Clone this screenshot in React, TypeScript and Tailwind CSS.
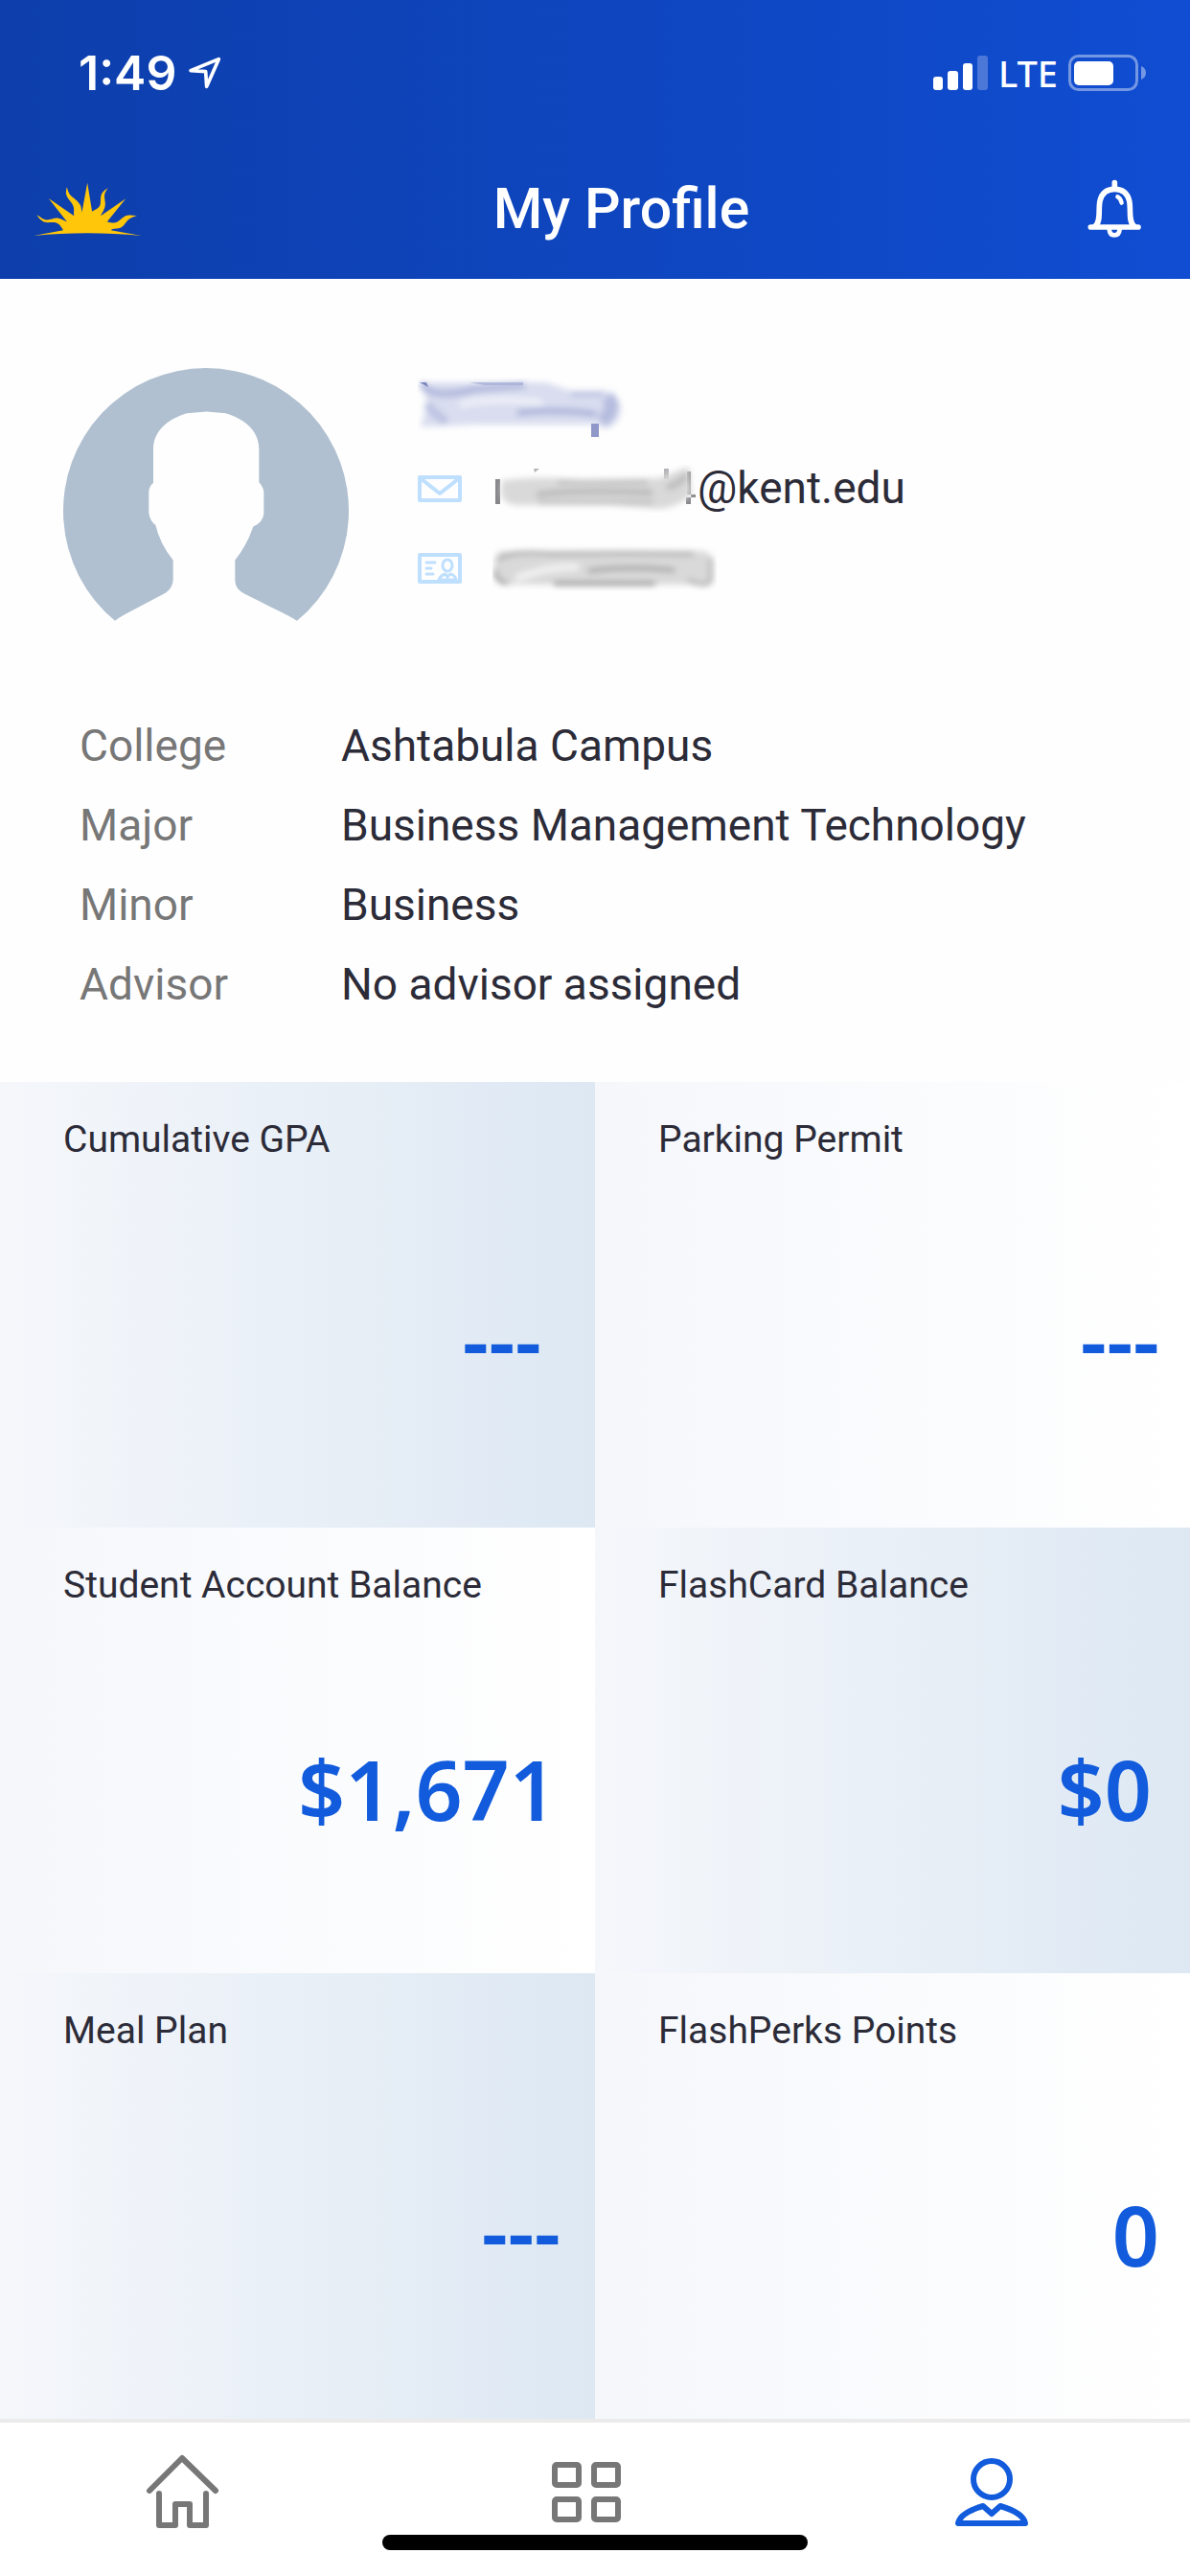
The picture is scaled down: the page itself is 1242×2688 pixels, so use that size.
import { clsx } from 'clsx'

type Stat = { label: string; value: string | null; shaded: boolean; inset: string }

const DETAILS = [
  { label: 'College', value: 'Ashtabula Campus' },
  { label: 'Major', value: 'Business Management Technology' },
  { label: 'Minor', value: 'Business' },
  { label: 'Advisor', value: 'No advisor assigned' },
]

const STATS: Stat[] = [
  { label: 'Cumulative GPA', value: null, shaded: true, inset: 'pr-14' },
  { label: 'Parking Permit', value: null, shaded: false, inset: 'pr-8' },
  { label: 'Student Account Balance', value: '$1,671', shaded: false, inset: 'pr-10' },
  { label: 'FlashCard Balance', value: '$0', shaded: true, inset: 'pr-10' },
  { label: 'Meal Plan', value: null, shaded: true, inset: 'pr-9' },
  { label: 'FlashPerks Points', value: '0', shaded: false, inset: 'pr-8' },
]

function StatusBar() {
  return (
    <div className="flex items-center justify-between pt-12 pl-[82px] pr-[46px] text-white">
      <div className="flex items-center gap-3">
        <span className="font-['Inter',sans-serif] text-[50px] leading-14 font-semibold">1:49</span>
        <svg viewBox="584 174 108 108" className="size-9" fill="none" stroke="currentColor" strokeWidth="11" strokeLinejoin="round">
          <path d="M681 185 593 221 640 224 643 271Z" />
        </svg>
      </div>
      <div className="flex items-center gap-[11px]">
        <svg viewBox="0 0 57 36" className="h-9 w-[57px]" fill="currentColor">
          <rect x="0" y="22" width="10" height="14" rx="3" />
          <rect x="15" y="16" width="11" height="20" rx="3" />
          <rect x="31" y="8" width="10" height="28" rx="3" />
          <rect x="46" y="0" width="11" height="36" rx="3" opacity="0.25" />
        </svg>
        <span className="font-['Noto_Sans',sans-serif] text-[38px] leading-14 font-medium">LTE</span>
        <svg viewBox="0 0 81 38" className="h-[38px] w-[81px]">
          <rect x="1.5" y="1.5" width="70" height="35" rx="9" fill="none" stroke="white" strokeWidth="3" opacity="0.42" />
          <rect x="6" y="7" width="41" height="25" rx="5" fill="white" />
          <path d="M76 12Q81 14 81 19Q81 24 76 26Z" fill="white" opacity="0.42" />
        </svg>
      </div>
    </div>
  )
}

function SunLogo() {
  return (
    <svg viewBox="104 565 340 172" className="mr-3.5 h-[57px] w-[113px]" fill="#ffc60a">
      <path d="M104 734 197 717C190 705 185 695 170 692C155 690 145 696 132 688C122 682 116 672 114 669C124 672 132 684 146 684C160 684 170 676 182 679C196 682 202 688 209 690L151 616 231 671C229 662 232 655 230 645C227 630 212 622 207 606C204 598 207 590 208 581C212 590 212 596 218 604C228 616 246 624 252 640C254 648 255 654 256 660L273 567 288 658C300 650 312 648 314 634C316 622 313 612 318 602C323 592 332 588 338 583C332 592 328 598 327 606C326 620 332 632 328 644C325 655 319 662 315 671L394 617 335 690C348 692 358 696 368 690C382 682 386 672 400 670C412 668 420 672 431 670C420 674 412 676 404 682C392 692 388 706 374 710C364 713 354 710 347 717L443 734C330 723 215 723 104 734Z" />
    </svg>
  )
}

function BellIcon() {
  return (
    <svg viewBox="937 562 168 186" className="h-[62px] w-14" fill="none" stroke="white" strokeWidth="17" strokeLinecap="round" strokeLinejoin="round">
      <path d="M1022 573V592" />
      <path d="M947 712H1096" />
      <path d="M961 709C980 694 970 660 976 630C982 604 1000 593 1022 593C1044 593 1062 604 1068 630C1074 660 1064 694 1083 709" />
      <path d="M1005 718C1006 732 1013 737 1021 737C1030 737 1037 732 1038 718" strokeWidth="14" />
      <path d="M1031 617Q1040 621 1044 636" strokeWidth="13" />
    </svg>
  )
}

function Avatar() {
  return (
    <svg viewBox="78 71 894 791" className="h-[264px] w-[298px] shrink-0" fill="#b0c0d0" role="img" aria-label="Profile photo">
      <path d="M240 862A447 447 0 1 1 810 862C790 848 770 840 645 777Q616 762 616 735V672Q655 622 673 567Q704 554 706 525V460Q704 440 691 428V325C691 268 650 232 587 212L527 207 465 212C400 232 360 270 360 325V430Q346 442 346 460V525Q350 550 367 562Q380 620 422 672V735Q420 760 398 775L270 842Q250 853 240 862Z" />
    </svg>
  )
}

function MailIcon() {
  return (
    <svg viewBox="0 0 46 28" className="h-7 w-[46px]" fill="none" stroke="#bfdffe" strokeWidth="4" strokeLinejoin="round">
      <rect x="2" y="2" width="42" height="24" />
      <path d="M4 4 23 19 42 4" />
    </svg>
  )
}

function IdCardIcon() {
  return (
    <svg viewBox="0 0 46 32" className="h-8 w-[46px]" fill="none" stroke="#bfdffe" strokeWidth="3" strokeLinecap="round" strokeLinejoin="round">
      <rect x="2" y="2" width="42" height="28" strokeWidth="4" />
      <path d="M9 10H18M9 16H14M9 22H16" />
      <ellipse cx="31" cy="13" rx="5" ry="6" />
      <path d="M22 28Q24 23 29 22L31 25 34 22Q39 23 40 28Z" />
    </svg>
  )
}

// Private values are drawn as a smudge instead of text.
function NameSmudge() {
  return (
    <svg viewBox="0 0 220 64" className="h-16 w-[220px]" role="img" aria-label="Name hidden">
      <defs>
        <filter id="soft-name" x="-10%" y="-20%" width="120%" height="140%">
          <feGaussianBlur stdDeviation="3" />
        </filter>
      </defs>
      <g filter="url(#soft-name)">
        <path d="M3 5H134L160 14H198Q212 20 212 34Q210 50 196 53L182 49H60L20 51H3L10 27Z" fill="#d9ddef" />
        <path d="M4 6Q14 24 60 12L112 8" stroke="#b0b7dc" strokeWidth="7" fill="none" />
        <path d="M10 27Q14 36 30 46" stroke="#bcc3e2" strokeWidth="9" fill="none" />
        <path d="M44 28Q80 20 130 26" stroke="#eceef7" strokeWidth="8" fill="none" />
        <path d="M104 37Q140 32 186 38" stroke="#a9b1d8" strokeWidth="6" fill="none" />
        <path d="M160 17H194" stroke="#b3badd" strokeWidth="4" />
        <path d="M198 20Q208 32 192 46" stroke="#b5bcde" strokeWidth="14" fill="none" />
      </g>
      <path d="M181 48H189V62H181Z" fill="#8f98c9" />
      <path d="M54 5H110V8H70Z" fill="#98a1d0" opacity="0.6" />
      <path d="M2 5H9L11 10Z" fill="#7b86bd" />
    </svg>
  )
}

function EmailSmudge() {
  return (
    <svg viewBox="0 0 212 50" className="h-[50px] w-[212px]" role="img" aria-label="Email user hidden">
      <defs>
        <filter id="soft-mail" x="-10%" y="-20%" width="120%" height="140%">
          <feGaussianBlur stdDeviation="3" />
        </filter>
      </defs>
      <path d="M1 15H6V41H1Z" fill="#85858a" />
      <path d="M41 4H47L42 8Z M177 4H182V15H177Z" fill="#b4b4b8" />
      <path d="M201 7H205V41H200V34H210V31H201Z" fill="#85858a" />
      <g filter="url(#soft-mail)">
        <path d="M8 16Q50 11 90 16L172 14 203 2 206 30Q192 45 170 46L120 42H30Q10 44 7 30Z" fill="#d9d9d9" />
        <path d="M44 31Q80 26 165 29" stroke="#b0b0b0" strokeWidth="5" fill="none" />
        <path d="M66 18H160" stroke="#b8b8b8" strokeWidth="4" />
        <path d="M46 39H165" stroke="#b4b4b4" strokeWidth="3" />
        <path d="M180 24Q194 20 201 10" stroke="#bcbcbc" strokeWidth="7" fill="none" />
      </g>
    </svg>
  )
}

function IdSmudge() {
  return (
    <svg viewBox="0 0 234 50" className="h-[50px] w-[234px]" role="img" aria-label="ID hidden">
      <defs>
        <filter id="soft-id" x="-10%" y="-20%" width="120%" height="140%">
          <feGaussianBlur stdDeviation="3" />
        </filter>
      </defs>
      <g filter="url(#soft-id)">
        <rect x="2" y="7" width="227" height="35" rx="10" fill="#d9d9d9" />
        <path d="M6 16Q20 6 60 10L140 9 210 10" stroke="#ababab" strokeWidth="4" fill="none" />
        <path d="M100 28Q140 22 190 27" stroke="#a8a8a8" strokeWidth="5" fill="none" />
        <path d="M64 41H170" stroke="#8c8c8c" strokeWidth="4" />
        <path d="M24 36Q60 22 90 24" stroke="#f0f0f0" strokeWidth="8" fill="none" />
        <path d="M4 26Q1 38 16 41" stroke="#858585" strokeWidth="3" fill="none" />
        <path d="M204 37Q222 46 228 38V14" stroke="#b0b0b0" strokeWidth="4" fill="none" />
      </g>
    </svg>
  )
}

function StatCard({ label, value, shaded, inset }: Stat) {
  return (
    <section className={clsx('h-[465px] bg-linear-to-r from-[#f5f7fb] pt-8', shaded ? 'to-[#dde8f3]' : 'to-white')}>
      <h2 className="pl-[66px] text-[39px] leading-14">{label}</h2>
      <p
        className={clsx(
          "text-right font-['Noto_Sans',sans-serif] text-[86px] leading-[112px] font-semibold text-[#115bdc]",
          value === null ? 'pt-[125px]' : 'pt-[129px]',
          inset,
        )}
      >
        {value ?? '---'}
      </p>
    </section>
  )
}

function TabBar() {
  return (
    <nav className="relative flex h-[164px] items-start justify-between border-t-4 border-[#ebebeb] bg-white pt-[30px] pr-[165px] pl-[149px] text-[#777777]">
      <button type="button" aria-label="Home">
        <svg viewBox="149 58 84 84" className="size-[84px]" fill="none" stroke="currentColor" strokeWidth="6" strokeLinecap="round" strokeLinejoin="round">
          <path d="M156 99 190 65 225 99" />
          <path d="M166 102V135H183V113H198V135H215V102" />
        </svg>
      </button>
      <button type="button" aria-label="Menu">
        <svg viewBox="571 58 84 84" className="size-[84px]" fill="none" stroke="currentColor" strokeWidth="6">
          <rect x="579" y="72" width="25" height="21" rx="2" />
          <rect x="620" y="72" width="25" height="21" rx="2" />
          <rect x="579" y="108" width="25" height="21" rx="2" />
          <rect x="620" y="108" width="25" height="21" rx="2" />
        </svg>
      </button>
      <button type="button" aria-label="Profile" aria-current="page" className="text-[#115bdc]">
        <svg viewBox="993 58 84 84" className="size-[84px]" fill="none" stroke="currentColor" strokeWidth="6" strokeLinejoin="round">
          <circle cx="1035" cy="87" r="19" />
          <path d="M1000 133H1070Q1068 122 1044 115L1035 123 1026 115Q1002 122 1000 133Z" />
        </svg>
      </button>
      <div className="absolute bottom-[27px] left-1/2 h-4 w-[444px] -translate-x-1/2 rounded-full bg-black" />
    </nav>
  )
}

export default function App() {
  return (
    <div className="flex min-h-screen flex-col bg-[#fefefe] font-['Roboto',sans-serif] text-[#2c2b38]">
      <header className="h-[291px] bg-linear-to-r from-[#0d3eab] to-[#104dd2]">
        <StatusBar />
        <div className="flex items-center justify-between pt-[74px] pr-[51px] pl-[35px]">
          <SunLogo />
          <h1 className="text-[59px] leading-[80px] font-medium text-white">My Profile</h1>
          <button type="button" aria-label="Notifications">
            <BellIcon />
          </button>
        </div>
      </header>

      <main className="flex-1">
        <div className="flex pt-[93px] pl-[66px]">
          <Avatar />
          <div className="flex flex-col pl-[72px] text-[46px]">
            <div className="flex h-[84px] items-center">
              <NameSmudge />
            </div>
            <div className="flex h-[83px] items-center">
              <MailIcon />
              <div className="flex items-center pl-[34px]">
                <EmailSmudge />
                <span>@kent.edu</span>
              </div>
            </div>
            <div className="flex h-[83px] items-center">
              <IdCardIcon />
              <div className="pl-8">
                <IdSmudge />
              </div>
            </div>
          </div>
        </div>

        <dl className="grid grid-cols-[273px_1fr] pt-[89px] pb-[60px] pl-[83px] text-[46px] leading-[83px]">
          {DETAILS.map(d => (
            <div key={d.label} className="contents">
              <dt className="text-[#777777]">{d.label}</dt>
              <dd>{d.value}</dd>
            </div>
          ))}
        </dl>

        <div className="grid grid-cols-2">
          {STATS.map(s => <StatCard key={s.label} {...s} />)}
        </div>
      </main>

      <TabBar />
    </div>
  )
}
